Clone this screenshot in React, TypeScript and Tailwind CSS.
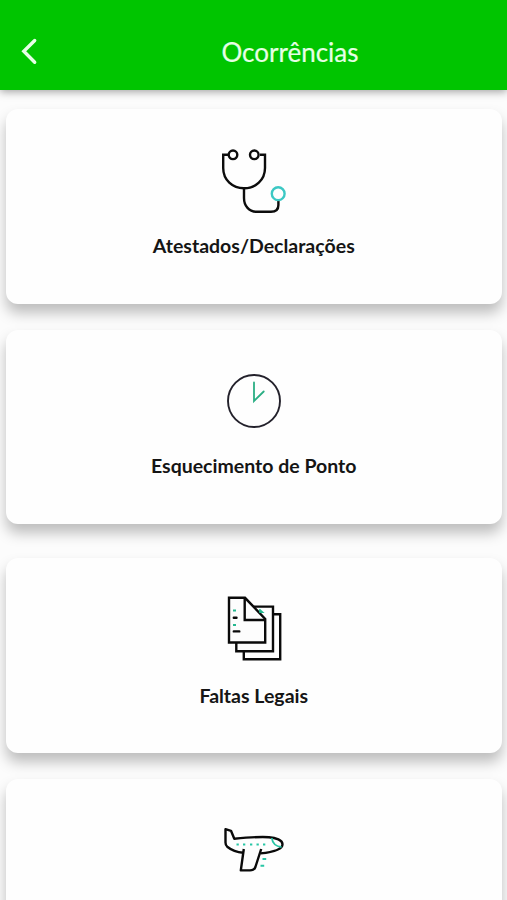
import type { ReactNode } from "react";

interface OccurrenceCardProps {
  label?: string;
  icon: ReactNode;
  className?: string;
}

function StethoscopeIcon() {
  return (
    <svg width="100" height="90" viewBox="0 0 100 90" fill="none" stroke="#0c0c0c" strokeWidth="2.4">
      <path d="M24 19.7H19.2V33C19.2 45 28.5 53.3 40 53.3S61 45 61 33V19.7H56" />
      <circle cx="29" cy="19.8" r="4.3" />
      <circle cx="50.3" cy="19.8" r="4.3" />
      <path d="M40 53.5V63C40 71 45 76.8 53 76.8H67C72.5 76.8 74.4 73.5 74.4 70V65.5" />
      <circle cx="74.2" cy="58.7" r="6.4" stroke="#3cc8c4" />
    </svg>
  );
}

function ClockIcon() {
  return (
    <svg width="100" height="80" viewBox="0 0 100 80" fill="none">
      <circle cx="50" cy="41" r="26" stroke="#23212b" strokeWidth="1.9" />
      <path d="M50 22.5V41L59.7 31.5" stroke="#2bae84" strokeWidth="1.8" strokeLinecap="round" />
    </svg>
  );
}

function DocumentsIcon() {
  return (
    <svg width="100" height="85" viewBox="0 0 100 85" fill="none" stroke="#0a0a0a" strokeWidth="2.4">
      <path d="M39.8 66V74.2H76.2V29.3H69" />
      <path d="M32.3 58V66.2H69V21.6H50" />
      <path d="M25 12.8H41L61.2 34V57.5H25Z" fill="#fdfdfd" />
      <path d="M40.7 12.8V35H61.2" />
      <path d="M29.8 32.7H32.5M29.8 46.4H35.3" strokeLinecap="round" />
      <path d="M29 25.5H32M29 40H32M55.2 27H58L55.2 24.5" stroke="#25b890" strokeWidth="2" />
    </svg>
  );
}

function PlaneIcon() {
  return (
    <svg width="100" height="70" viewBox="0 0 100 70" fill="none" stroke="#0a0a0a" strokeWidth="2.4" strokeLinejoin="round">
      <path d="M39.2 37.8C33 37.2 27 34.7 23.2 31.7C21.8 30.5 21.5 29.3 21.5 27.5V14.2L27 15.8L30.3 23.7C43 22.5 55 21.5 65 22.2C72 22.7 78.5 25.3 78.5 29.2C78.5 35.2 67 37.3 56.5 38.4" />
      <path d="M39.8 34L36.8 55.4H46C49 55.4 50.5 54.5 51.4 52L57.2 34" />
      <path d="M67.8 23C68.5 28.5 72 31.5 77.5 32" stroke="#28c6a5" strokeWidth="1.8" />
      <path d="M32.5 29.4H34.8M39 29.4H41.3M46 29.4H48.3M52.5 29.4H54.8M59 29.4H61.3" stroke="#28c6a5" strokeWidth="2" />
      <path d="M58.5 44H62.2M56.5 50.7H60.2" stroke="#28c6a5" strokeWidth="2" />
    </svg>
  );
}

function OccurrenceCard({ label, icon, className = "" }: OccurrenceCardProps) {
  return (
    <button
      className={`flex w-full shrink-0 flex-col items-center rounded-xl bg-[#fefefe] shadow-[0_9px_14px_rgba(0,0,0,0.25)] ${className}`}
    >
      {icon}
      {label && <span className="text-[19.5px] font-bold leading-6 text-[#151515]">{label}</span>}
    </button>
  );
}

export default function App() {
  return (
    <div className="flex h-[900px] w-full flex-col overflow-hidden bg-[#fcfcfc] font-['Lato',sans-serif]">
      <header className="z-10 flex h-[90px] shrink-0 items-end bg-[#00c500] pb-[22px] text-[#e6ffe6] shadow-[0_2px_8px_rgba(0,0,0,0.35)]">
        <button aria-label="Voltar" className="ml-5 mb-0.5">
          <svg width="20" height="30" viewBox="0 0 20 30" fill="none" stroke="currentColor" strokeWidth="3.4" strokeLinecap="round">
            <path d="M14.7 4.5L3.8 15.2L14.7 26.3" />
          </svg>
        </button>
        <h1 className="ml-[33px] flex-1 text-center text-[26px] leading-8 [-webkit-text-stroke:0.2px]">Ocorrências</h1>
      </header>

      <main className="flex flex-1 flex-col overflow-hidden pl-[5.5px] pr-[5px] pt-[19px]">
        <OccurrenceCard label="Atestados/Declarações" icon={<StethoscopeIcon />} className="h-[195px] pt-[26px] gap-[9px]" />
        <OccurrenceCard label="Esquecimento de Ponto" icon={<ClockIcon />} className="mt-[26px] h-[194px] pt-[30px] gap-[14px]" />
        <OccurrenceCard label="Faltas Legais" icon={<DocumentsIcon />} className="mt-[34px] h-[195px] pt-[27px] gap-[14px]" />
        <OccurrenceCard icon={<PlaneIcon />} className="mt-[26px] h-[195px] pt-[36px]" />
      </main>
    </div>
  );
}
